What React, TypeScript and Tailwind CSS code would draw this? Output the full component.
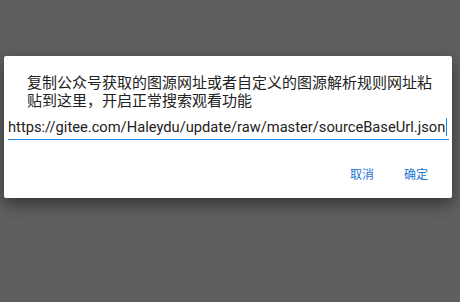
import React from 'react';

const App: React.FC = () => {
  const url = 'https://gitee.com/Haleydu/update/raw/master/sourceBaseUrl.json';

  return (
    <div className="w-[460px] h-[302px] bg-[#5f5f5f] pt-[56px] pl-[4px] overflow-hidden">
      <div className="w-[448px] h-[142px] bg-white rounded-[2px] shadow-[0_6px_16px_rgba(0,0,0,0.45)] flex flex-col">
        {/* Message */}
        <p
          className="pl-[23px] pr-[20px] pt-[17px] text-[15px] leading-[17.5px] text-[#222]"
          style={{ fontFamily: '"Noto Sans CJK SC", sans-serif' }}
        >
          复制公众号获取的图源网址或者自定义的图源解析规则网址粘贴到这里，开启正常搜索观看功能
        </p>

        {/* Input */}
        <div className="mt-[10px] ml-[4px] mr-[3px]">
          <div className="flex items-center pb-[3px]">
            <span className="text-[14.7px] leading-[18px] text-[#222] whitespace-nowrap" style={{ fontFamily: 'Roboto, sans-serif' }}>
              {url}
            </span>
            <span className="w-[1px] h-[18px] bg-[#1e88e5] ml-[1px]" />
          </div>
          <div className="h-[1px] bg-[#1e88e5]" />
        </div>

        {/* Actions */}
        <div className="mt-auto mb-[18px] flex justify-end gap-[30px] pr-[24px]">
          <button className="text-[12px] leading-[13px] text-[#1976d2]" style={{ fontFamily: '"Noto Sans CJK SC", sans-serif' }}>
            取消
          </button>
          <button className="text-[12px] leading-[13px] text-[#1976d2]" style={{ fontFamily: '"Noto Sans CJK SC", sans-serif' }}>
            确定
          </button>
        </div>
      </div>
    </div>
  );
};

export default App;
